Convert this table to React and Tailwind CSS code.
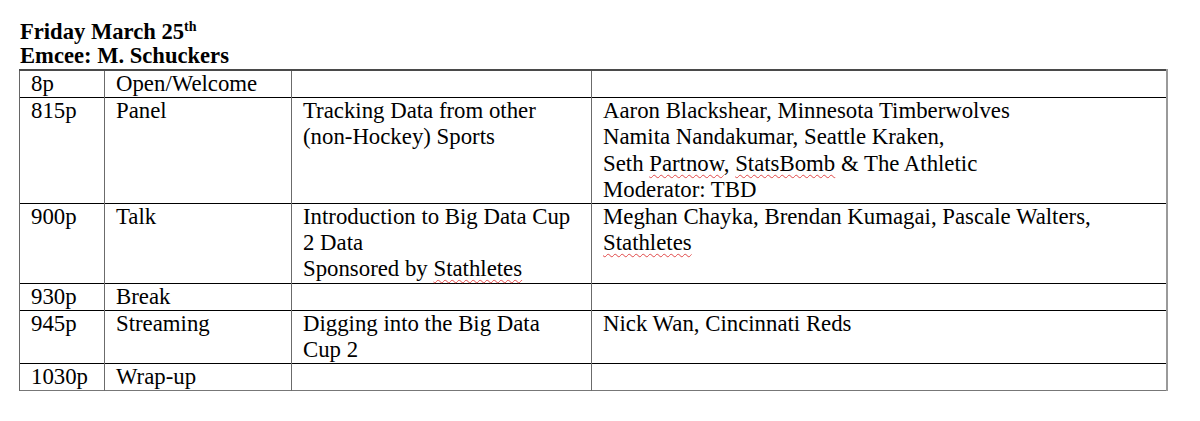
import React from "react";

const sq = "underline decoration-wavy decoration-[#e04848] decoration-1 underline-offset-[3px]";
const serif = "font-['Liberation_Serif','Times_New_Roman','Tinos','DejaVu_Serif',serif]";

const rows = [
  { t: "8p", k: "Open/Welcome", title: null, who: null },
  {
    t: "815p",
    k: "Panel",
    title: (
      <>
        Tracking Data from other
        <br />
        (non-Hockey) Sports
      </>
    ),
    who: (
      <>
        Aaron Blackshear, Minnesota Timberwolves
        <br />
        Namita Nandakumar, Seattle Kraken,
        <br />
        Seth <span className={sq}>Partnow</span>, <span className={sq}>StatsBomb</span> &amp; The Athletic
        <br />
        Moderator: TBD
      </>
    ),
  },
  {
    t: "900p",
    k: "Talk",
    title: (
      <>
        Introduction to Big Data Cup
        <br />
        2 Data
        <br />
        Sponsored by <span className={sq}>Stathletes</span>
      </>
    ),
    who: (
      <>
        Meghan Chayka, Brendan Kumagai, Pascale Walters,
        <br />
        <span className={sq}>Stathletes</span>
      </>
    ),
  },
  { t: "930p", k: "Break", title: null, who: null },
  {
    t: "945p",
    k: "Streaming",
    title: (
      <>
        Digging into the Big Data
        <br />
        Cup 2
      </>
    ),
    who: <>Nick Wan, Cincinnati Reds</>,
  },
  { t: "1030p", k: "Wrap-up", title: null, who: null },
];

export default function App() {
  const cell =
    serif +
    " align-top pl-[11px] pr-1 py-0 border-x border-x-[#6b6b6b] whitespace-nowrap text-[22.8px] leading-[26.2px] text-black";
  return (
    <div className={serif + " w-[1200px] h-[421px] bg-white text-black pt-[20px] pl-[19px]"}>
      <div className={serif + " font-bold text-[22.6px] leading-[24px] pl-[1px]"}>
        Friday March 25<span className="text-[14px] leading-[0] align-[8px]">th</span>
      </div>
      <div className={serif + " font-bold text-[22.6px] leading-[24px] pl-[1px]"}>Emcee: M. Schuckers</div>
      <table
        className={
          serif +
          " mt-[1px] border-collapse text-[22.8px] leading-[26.2px] table-fixed w-[1147px] border-t-2 border-t-[#4a4a4a] border-b border-b-[#777]"
        }
      >
        <colgroup>
          <col className="w-[85px]" />
          <col className="w-[187px]" />
          <col className="w-[300px]" />
          <col className="w-[575px]" />
        </colgroup>
        <tbody>
          {rows.map((r, i) => (
            <tr key={i} className={i < rows.length - 1 ? "border-b border-b-black" : ""}>
              <td className={cell + " border-l-[#666]"}>{r.t}</td>
              <td className={cell}>{r.k}</td>
              <td className={cell}>{r.title}</td>
              <td className={cell + " border-r-[#9a9a9a] border-r-2"}>{r.who}</td>
            </tr>
          ))}
        </tbody>
      </table>
    </div>
  );
}
